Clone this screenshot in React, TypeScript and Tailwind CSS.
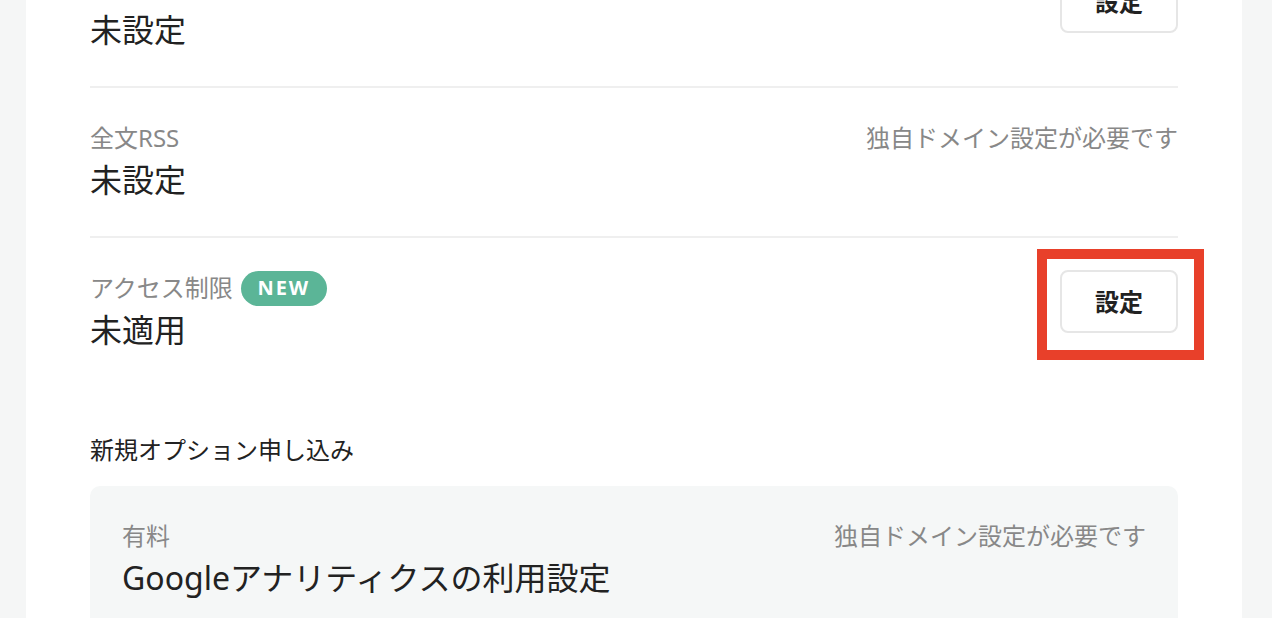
const font = { fontFamily: '"Noto Sans", "Noto Sans CJK JP", sans-serif' };

function SetButton() {
  return (
    <button className="w-[118px] h-[63px] shrink-0 rounded-[8px] border-2 border-[#e6e6e6] bg-white text-[24px] font-bold text-[#222]">
      設定
    </button>
  );
}

function Row({
  label,
  value,
  note,
  badge,
  action,
  divider = true,
}: {
  label: string;
  value: string;
  note?: string;
  badge?: boolean;
  action?: React.ReactNode;
  divider?: boolean;
}) {
  return (
    <div className={`flex items-start justify-between py-8 ${divider ? 'border-b-2 border-[#efefef]' : ''}`}>
      <div>
        <div className="flex items-center gap-[8px] h-[36px] text-[24px] leading-[36px] text-[#888]">
          <span>{label}</span>
          {badge && (
            <span className="inline-flex items-center justify-center w-[86px] h-[35px] rounded-full bg-[#5bb597] text-white text-[20px] font-bold tracking-[2px]">
              NEW
            </span>
          )}
        </div>
        <div className="text-[32px] leading-[48px] text-[#222]">{value}</div>
      </div>
      {note && <div className="text-[24px] leading-[36px] text-[#888]">{note}</div>}
      {action}
    </div>
  );
}

export default function App() {
  return (
    <div className="w-[1272px] h-[618px] overflow-hidden bg-[#f5f6f6]" style={font}>
      <div className="ml-[26px] mr-[30px] h-full flex flex-col bg-white px-16">
        <div className="-mt-[62px]">
          <Row label="独自ドメイン" value="未設定" action={<SetButton />} />
          <Row label="全文RSS" value="未設定" note="独自ドメイン設定が必要です" />
          <Row
            label="アクセス制限"
            value="未適用"
            badge
            divider={false}
            action={
              <div className="-mt-[21px] -ml-[23px] -mr-[26px] -mb-[38px] border-[10px] border-[#e8402a] pt-[11px] pl-[13px] pr-[16px] pb-[17px]">
                <SetButton />
              </div>
            }
          />

          <div className="mt-[46px] text-[24px] leading-[36px] text-[#222]">新規オプション申し込み</div>

          <div className="mt-[18px] rounded-[10px] bg-[#f5f7f7] px-8 py-8">
            <div className="flex items-start justify-between">
              <div>
                <div className="text-[24px] leading-[36px] text-[#888]">有料</div>
                <div className="text-[32px] leading-[48px] text-[#222]">Googleアナリティクスの利用設定</div>
              </div>
              <div className="text-[24px] leading-[36px] text-[#888]">独自ドメイン設定が必要です</div>
            </div>
          </div>
        </div>
      </div>
    </div>
  );
}
